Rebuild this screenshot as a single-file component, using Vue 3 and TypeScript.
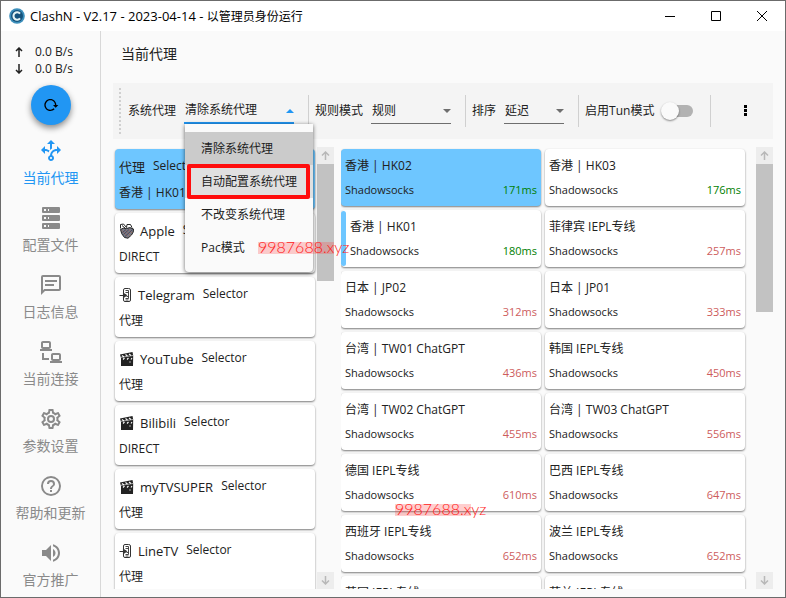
<script setup lang="ts">
import { ref } from 'vue'

interface NavItem { label: string; icon: string }
interface Group { name: string; now: string; icon?: 'apple' | 'phone' | 'clapper' }
interface Proxy { name: string; delay?: string; fast?: boolean; state?: 'selected' | 'active' }

const navItems: NavItem[] = [
  { label: '当前代理', icon: 'M9.64 13.4C8.63 12.5 7.34 12.03 6 12V15L2 11L6 7V10C7.67 10 9.3 10.57 10.63 11.59C10.22 12.15 9.89 12.76 9.64 13.4M18 15V12C17.5 12 13.5 12.16 13.05 16.2C14.61 16.75 15.43 18.47 14.88 20.03C14.33 21.59 12.61 22.41 11.05 21.86C9.5 21.3 8.67 19.59 9.22 18.03C9.5 17.17 10.2 16.5 11.05 16.2C11.34 12.61 14.4 9.88 18 10V7L22 11L18 15M13 19C13 18.45 12.55 18 12 18C11.45 18 11 18.45 11 19C11 19.55 11.45 20 12 20C12.55 20 13 19.55 13 19M11 11.12C11.58 10.46 12.25 9.89 13 9.43V5H16L12 1L8 5H11V11.12Z' },
  { label: '配置文件', icon: 'M4,1H20A1,1 0 0,1 21,2V6A1,1 0 0,1 20,7H4A1,1 0 0,1 3,6V2A1,1 0 0,1 4,1M4,9H20A1,1 0 0,1 21,10V14A1,1 0 0,1 20,15H4A1,1 0 0,1 3,14V10A1,1 0 0,1 4,9M4,17H20A1,1 0 0,1 21,18V22A1,1 0 0,1 20,23H4A1,1 0 0,1 3,22V18A1,1 0 0,1 4,17M9,5H10V3H9V5M9,13H10V11H9V13M9,21H10V19H9V21M5,3V5H7V3H5M5,11V13H7V11H5M5,19V21H7V19H5Z' },
  { label: '日志信息', icon: 'M20 2H4A2 2 0 0 0 2 4V22L6 18H20A2 2 0 0 0 22 16V4A2 2 0 0 0 20 2M20 16H5.17L4 17.17V4H20V16M6 7H18V9H6V7M6 11H15V13H6V11Z' },
  { label: '当前连接', icon: 'M4,1C2.89,1 2,1.89 2,3V7C2,8.11 2.89,9 4,9H1V11H13V9H10C11.11,9 12,8.11 12,7V3C12,1.89 11.11,1 10,1H4M4,3H10V7H4V3M14,13C12.89,13 12,13.89 12,15V19C12,20.11 12.89,21 14,21H11V23H23V21H20C21.11,21 22,20.11 22,19V15C22,13.89 21.11,13 20,13H14M3,13V18L3,20H10V18H5V13H3M14,15H20V19H14V15Z' },
  { label: '参数设置', icon: 'M12,8A4,4 0 0,1 16,12A4,4 0 0,1 12,16A4,4 0 0,1 8,12A4,4 0 0,1 12,8M12,10A2,2 0 0,0 10,12A2,2 0 0,0 12,14A2,2 0 0,0 14,12A2,2 0 0,0 12,10M10,22C9.75,22 9.54,21.82 9.5,21.58L9.13,18.93C8.5,18.68 7.96,18.34 7.44,17.94L4.95,18.95C4.73,19.03 4.46,18.95 4.34,18.73L2.34,15.27C2.21,15.05 2.27,14.78 2.46,14.63L4.57,12.97L4.5,12L4.57,11L2.46,9.37C2.27,9.22 2.21,8.95 2.34,8.73L4.34,5.27C4.46,5.05 4.73,4.96 4.95,5.05L7.44,6.05C7.96,5.66 8.5,5.32 9.13,5.07L9.5,2.42C9.54,2.18 9.75,2 10,2H14C14.25,2 14.46,2.18 14.5,2.42L14.87,5.07C15.5,5.32 16.04,5.66 16.56,6.05L19.05,5.05C19.27,4.96 19.54,5.05 19.66,5.27L21.66,8.73C21.79,8.95 21.73,9.22 21.54,9.37L19.43,11L19.5,12L19.43,13L21.54,14.63C21.73,14.78 21.79,15.05 21.66,15.27L19.66,18.73C19.54,18.95 19.27,19.04 19.05,18.95L16.56,17.95C16.04,18.34 15.5,18.68 14.87,18.93L14.5,21.58C14.46,21.82 14.25,22 14,22H10M11.25,4L10.88,6.61C9.68,6.86 8.62,7.5 7.85,8.39L5.44,7.35L4.69,8.65L6.8,10.2C6.4,11.37 6.4,12.64 6.8,13.8L4.68,15.36L5.43,16.66L7.86,15.62C8.63,16.5 9.68,17.14 10.87,17.38L11.24,20H12.76L13.13,17.39C14.32,17.14 15.37,16.5 16.14,15.62L18.57,16.66L19.32,15.36L17.2,13.81C17.6,12.64 17.6,11.37 17.2,10.2L19.31,8.65L18.56,7.35L16.15,8.39C15.38,7.5 14.32,6.86 13.12,6.62L12.75,4H11.25Z' },
  { label: '帮助和更新', icon: 'M11,18H13V16H11V18M12,2A10,10 0 0,0 2,12A10,10 0 0,0 12,22A10,10 0 0,0 22,12A10,10 0 0,0 12,2M12,20C7.59,20 4,16.41 4,12C4,7.59 7.59,4 12,4C16.41,4 20,7.59 20,12C20,16.41 16.41,20 12,20M12,6A4,4 0 0,0 8,10H10A2,2 0 0,1 12,8A2,2 0 0,1 14,10C14,12 11,11.75 11,15H13C13,12.75 16,12.5 16,10A4,4 0 0,0 12,6Z' },
  { label: '官方推广', icon: 'M14,3.23V5.29C16.89,6.15 19,8.83 19,12C19,15.17 16.89,17.84 14,18.7V20.77C18,19.86 21,16.28 21,12C21,7.72 18,4.14 14,3.23M16.5,12C16.5,10.23 15.5,8.71 14,7.97V16C15.5,15.29 16.5,13.76 16.5,12M3,9V15H7L12,20V4L7,9H3Z' },
]

const groups: Group[] = [
  { name: '代理', now: '香港 | HK01' },
  { name: 'Apple', now: 'DIRECT', icon: 'apple' },
  { name: 'Telegram', now: '代理', icon: 'phone' },
  { name: 'YouTube', now: '代理', icon: 'clapper' },
  { name: 'Bilibili', now: 'DIRECT', icon: 'clapper' },
  { name: 'myTVSUPER', now: '代理', icon: 'clapper' },
  { name: 'LineTV', now: '代理', icon: 'phone' },
]

const proxies: Proxy[] = [
  { name: '香港 | HK02', delay: '171ms', fast: true, state: 'selected' },
  { name: '香港 | HK03', delay: '176ms', fast: true },
  { name: '香港 | HK01', delay: '180ms', fast: true, state: 'active' },
  { name: '菲律宾 IEPL专线', delay: '257ms' },
  { name: '日本 | JP02', delay: '312ms' },
  { name: '日本 | JP01', delay: '333ms' },
  { name: '台湾 | TW01 ChatGPT', delay: '436ms' },
  { name: '韩国 IEPL专线', delay: '450ms' },
  { name: '台湾 | TW02 ChatGPT', delay: '455ms' },
  { name: '台湾 | TW03 ChatGPT', delay: '556ms' },
  { name: '德国 IEPL专线', delay: '610ms' },
  { name: '巴西 IEPL专线', delay: '647ms' },
  { name: '西班牙 IEPL专线', delay: '652ms' },
  { name: '波兰 IEPL专线', delay: '652ms' },
  { name: '英国 IEPL专线' },
  { name: '荷兰 IEPL专线' },
]

const proxyModes = ['清除系统代理', '自动配置系统代理', '不改变系统代理', 'Pac模式']
const proxyMode = ref(proxyModes[0])
const ruleMode = ref('规则')
const sorting = ref('延迟')
const tun = ref(false)
const activeNav = ref(0)
const activeGroup = ref(0)
</script>

<template>
  <div class="window">
    <header class="titlebar">
      <svg class="logo" viewBox="0 0 16 16" aria-hidden="true">
        <circle cx="8" cy="8" r="7.8" fill="#3d8fbb" />
        <circle cx="8" cy="8" r="6" fill="#14527c" />
        <path d="M11 5.6A3.7 3.7 0 1 0 11 10.400" fill="none" stroke="#e4f3f3" stroke-width="2.1" />
      </svg>
      <span class="caption"><span class="version">ClashN - V2.17 - 2023-04-14 - </span>以管理员身份运行</span>
      <button class="win-btn" type="button" aria-label="最小化">
        <svg viewBox="0 0 10 10"><path d="M0 5.500H10" /></svg>
      </button>
      <button class="win-btn" type="button" aria-label="最大化">
        <svg viewBox="0 0 10 10"><path d="M.5 .5H9.500V9.500H.5Z" /></svg>
      </button>
      <button class="win-btn" type="button" aria-label="关闭">
        <svg viewBox="0 0 10 10"><path d="M0 0L10 10M10 0L0 10" /></svg>
      </button>
    </header>

    <div class="body">
      <aside class="sidebar">
        <div class="rates">
          <div class="rate">
            <svg viewBox="0 0 8 10"><path d="M4 10V1M1 4L4 1L7 4" /></svg><span>0.0 B/s</span>
          </div>
          <div class="rate">
            <svg viewBox="0 0 8 10"><path d="M4 0V9M1 6L4 9L7 6" /></svg><span>0.0 B/s</span>
          </div>
        </div>
        <button class="reload" type="button" aria-label="重新加载">
          <svg viewBox="0 0 24 24"><path d="M2 12C2 16.97 6.03 21 11 21C13.39 21 15.68 20.06 17.4 18.4L15.9 16.9C14.63 18.25 12.86 19 11 19C4.76 19 1.64 11.46 6.05 7.05C10.46 2.64 18 5.77 18 12H15L19 16H19.1L23 12H20C20 7.03 15.97 3 11 3C6.03 3 2 7.03 2 12Z" /></svg>
        </button>
        <nav class="nav">
          <button
            v-for="(item, i) in navItems"
            :key="item.label"
            type="button"
            :class="['nav-item', { current: i === activeNav }]"
            @click="activeNav = i"
          >
            <svg viewBox="0 0 24 24" aria-hidden="true"><path :d="item.icon" /></svg>
            <span>{{ item.label }}</span>
          </button>
        </nav>
      </aside>

      <main class="main">
        <h1 class="heading">当前代理</h1>

        <div class="toolbar">
          <span class="grip"></span>
          <div class="field">
            <label for="proxy-mode">系统代理</label>
            <div class="select open">
              <select id="proxy-mode" v-model="proxyMode">
                <option v-for="m in proxyModes" :key="m">{{ m }}</option>
              </select>
              <i class="caret"></i>
              <ul class="menu" role="listbox" aria-label="系统代理">
                <li
                  v-for="(m, i) in proxyModes"
                  :key="m"
                  role="option"
                  :aria-selected="m === proxyMode"
                  :class="{ chosen: m === proxyMode, marked: i === 1 }"
                  @click="proxyMode = m"
                >{{ m }}</li>
              </ul>
            </div>
          </div>
          <span class="sep"></span>
          <div class="field">
            <label for="rule-mode">规则模式</label>
            <div class="select rule">
              <select id="rule-mode" v-model="ruleMode">
                <option>规则</option>
                <option>全局</option>
                <option>直连</option>
              </select>
              <i class="caret"></i>
            </div>
          </div>
          <span class="sep"></span>
          <div class="field">
            <label for="sorting">排序</label>
            <div class="select sort">
              <select id="sorting" v-model="sorting">
                <option>延迟</option>
                <option>名称</option>
              </select>
              <i class="caret"></i>
            </div>
          </div>
          <span class="sep"></span>
          <div class="field tun">
            <label for="tun">启用Tun模式</label>
            <input id="tun" v-model="tun" class="switch" type="checkbox" role="switch" />
          </div>
          <span class="sep"></span>
          <button class="more" type="button" aria-label="更多">
            <svg viewBox="0 0 4 12"><path d="M1 0H4V3H1ZM1 4H4V7H1ZM1 8H4V11H1Z" /></svg>
          </button>
        </div>

        <div class="lists">
          <section class="pane groups-pane">
            <div class="groups">
              <button
                v-for="(g, i) in groups"
                :key="g.name"
                type="button"
                :class="['card', 'group', { selected: i === activeGroup }]"
                @click="activeGroup = i"
              >
                <span class="group-head">
                  <svg v-if="g.icon === 'apple'" class="emoji" viewBox="0 0 16 16" aria-hidden="true">
                    <path d="M1.500 6.500Q4 4.500 7.500 5.500Q11 3.500 14.500 6Q15 9 12.500 12L9 15.200L5.500 14.500Q2 11 1.500 6.500Z" fill="#777a86" stroke="#252525" />
                    <path d="M1.500 5.500V1.500L4.500 1L7.500 4.500M7.500 4.500L8 1.500H11.500L13 4.500M3 2.500L6 5" fill="none" stroke="#252525" />
                    <path d="M3 7.500L9 13.500M6 6.500L11.500 12.500M9.500 6L13 10" stroke="#a8664e" stroke-width=".7" />
                    <path d="M13.500 6.500L6 13.500M10 6.500L4.500 11.500M7 6.500L3.500 9.500" stroke="#2c3352" stroke-width=".7" />
                  </svg>
                  <svg v-else-if="g.icon === 'phone'" class="emoji narrow" viewBox="0 0 14 16" aria-hidden="true">
                    <path d="M4.500 6V3Q4.500 1.500 6 1.500H9.500Q11.500 1.500 11.500 3V13Q11.500 14.500 10 14.500H6Q4.500 14.500 4.500 13V10.500" fill="none" stroke="#333" />
                    <path d="M6.500 3.500H9.500V11.500H6.500M6.500 5.500H9.500M7.500 9.500H9.500M6.500 13H9.500" fill="none" stroke="#333" stroke-width=".9" />
                    <path d="M.5 8.500H5M4.500 6.500L7.500 8.200L4.500 10.500Z" fill="#333" stroke="#333" stroke-width="1.100" />
                  </svg>
                  <svg v-else-if="g.icon === 'clapper'" class="emoji" viewBox="0 0 16 16" aria-hidden="true">
                    <path d="M1 3.500L13.500 1L14.200 4.500L14 15H2V7Z" fill="#222" />
                    <path d="M3 4.500L5 6M6.500 3.500L8.500 5M10 3L12 4.500M4 8.500L5.500 7M8 8.500L9.500 7M12 8.500L13 7" stroke="#fff" stroke-width="1.100" />
                    <path d="M2 6.300L14 4.500M10 11H12" stroke="#fff" stroke-width=".6" />
                  </svg>
                  <span class="group-name">{{ g.name }}</span>
                  <span class="group-type">Selector</span>
                </span>
                <span class="group-now">{{ g.now }}</span>
              </button>
            </div>
            <div class="scroll" aria-hidden="true">
              <span class="arrow"><svg viewBox="0 0 9 9"><path d="M4.500 9V1M1 4.500L4.500 1L8 4.500" /></svg></span>
              <span class="track"><i class="thumb short"></i></span>
              <span class="arrow"><svg viewBox="0 0 9 9"><path d="M4.500 0V8M1 4.500L4.500 8L8 4.500" /></svg></span>
            </div>
          </section>

          <section class="pane proxies-pane">
            <div class="proxies">
              <button
                v-for="p in proxies"
                :key="p.name"
                type="button"
                :class="['card', 'proxy', p.state]"
              >
                <i v-if="p.state === 'active'" class="strip"></i>
                <span class="proxy-text">
                  <span>{{ p.name }}</span>
                  <span v-if="p.delay" class="proxy-foot">
                    <span>Shadowsocks</span>
                    <span :class="['delay', { fast: p.fast }]">{{ p.delay }}</span>
                  </span>
                </span>
              </button>
            </div>
            <div class="scroll" aria-hidden="true">
              <span class="arrow"><svg viewBox="0 0 9 9"><path d="M4.500 9V1M1 4.500L4.500 1L8 4.500" /></svg></span>
              <span class="track"><i class="thumb"></i></span>
              <span class="arrow"><svg viewBox="0 0 9 9"><path d="M4.500 0V8M1 4.500L4.500 8L8 4.500" /></svg></span>
            </div>
          </section>
        </div>
      </main>
    </div>

    <span class="watermark first">9987688.xyz</span>
    <span class="watermark second">9987688.xyz</span>
  </div>
</template>

<style>
body {
  margin: 0;
  background: #fafafa;
}
</style>

<style scoped>
* {
  box-sizing: border-box;
}

.window {
  position: relative;
  display: flex;
  flex-direction: column;
  height: 100vh;
  overflow: hidden;
  border: 1px solid #6b6b6b;
  background: #fafafa;
  color: #212121;
  font-family: "Open Sans", "Noto Sans CJK SC", sans-serif;
  font-size: 12px;
  line-height: 16px;
}

button,
select {
  padding: 0;
  border: 0;
  background: none;
  color: inherit;
  font: inherit;
}

svg {
  display: block;
}

.titlebar {
  display: flex;
  flex: none;
  align-items: center;
  height: 30px;
  padding-left: 8px;
  background: #fff;
  color: #000;
}

.logo {
  width: 16px;
  height: 16px;
}

.caption {
  flex: 1;
  padding-left: 5px;
}

.version {
  font-size: 13px;
}

.win-btn {
  display: grid;
  place-items: center;
  width: 46px;
  height: 30px;
}

.win-btn svg {
  width: 10px;
  height: 10px;
  overflow: visible;
  fill: none;
  stroke: #000;
}

.body {
  display: flex;
  flex: 1;
  min-height: 0;
}

.sidebar {
  display: flex;
  flex: none;
  flex-direction: column;
  align-items: center;
  width: 100px;
  padding-top: 12px;
  border-right: 1px solid #d8d8d8;
}

.rates {
  align-self: stretch;
  padding-left: 14px;
}

.rate {
  display: flex;
  align-items: center;
  gap: 12px;
  line-height: 17px;
}

.rate svg {
  width: 8px;
  height: 10px;
  fill: none;
  stroke: #212121;
  stroke-width: 1.500;
}

.reload {
  display: grid;
  flex: none;
  place-items: center;
  width: 40px;
  height: 40px;
  margin-top: 8px;
  border-radius: 50%;
  background: #2196f3;
  box-shadow: 0 3px 6px rgba(0, 0, 0, .45);
}

.reload svg {
  width: 16px;
  height: 16px;
}

.nav {
  display: flex;
  flex-direction: column;
  align-self: stretch;
  padding-top: 14px;
}

.nav-item {
  display: flex;
  flex: none;
  flex-direction: column;
  align-items: center;
  gap: 6px;
  height: 67px;
  color: #8a8a8a;
  font-size: 14px;
  line-height: 18px;
}

.nav-item svg {
  width: 24px;
  height: 24px;
  fill: currentColor;
}

.nav-item.current {
  color: #2196f3;
}

.main {
  display: flex;
  flex: 1;
  flex-direction: column;
  min-width: 0;
  padding: 0 12px 8px;
}

.heading {
  flex: none;
  margin: 0;
  padding: 13px 8px 19px;
  font-size: 14px;
  font-weight: 400;
  line-height: 20px;
}

.toolbar {
  display: flex;
  flex: none;
  align-items: center;
  height: 56px;
  padding-left: 6px;
  background: #f4f4f4;
}

.grip {
  width: 2px;
  height: 46px;
  margin-right: 7px;
  background: repeating-linear-gradient(#d0d0d0 0 2px, transparent 2px 4px);
}

.field {
  display: flex;
  align-items: center;
  gap: 8px;
}

.sep {
  width: 1px;
  height: 32px;
  margin: 0 6px 0 14px;
  background: #d0d0d0;
}

.select {
  position: relative;
  width: 110px;
}

.select.rule {
  width: 80px;
}

.select.sort {
  width: 60px;
}

.select select {
  display: block;
  width: 100%;
  height: 26px;
  padding-left: 1px;
  border-bottom: 1px solid #6e6e6e;
  border-radius: 0;
  outline: 0;
  appearance: none;
}

.select.open select {
  border-bottom: 2px solid #2196f3;
}

.caret {
  position: absolute;
  top: 11px;
  right: 0;
  border: 4px solid transparent;
  border-top-color: #6e6e6e;
  border-bottom-width: 0;
}

.open .caret {
  border-width: 0 4px 4px;
  border-bottom-color: #2196f3;
}

.menu {
  position: absolute;
  z-index: 2;
  top: 26px;
  left: 1px;
  width: 128px;
  margin: 0;
  padding: 8px 0;
  border-radius: 0 0 4px 4px;
  background: #fafafa;
  box-shadow: 0 1px 4px rgba(0, 0, 0, .6);
  list-style: none;
  white-space: nowrap;
}

.menu li {
  padding: 0 16px;
  line-height: 33px;
}

.menu .chosen {
  background: #cbcbcb;
}

.menu .marked {
  position: relative;
  background: #e0e0e0;
}

.menu .marked::after {
  position: absolute;
  inset: -1px 3px -1px 2px;
  border: 4px solid #ff0d0d;
  border-radius: 2px;
  content: "";
}

.switch {
  position: relative;
  width: 32px;
  height: 18px;
  margin: 0;
  appearance: none;
}

.switch::before {
  position: absolute;
  inset: 3px 0 3px 4px;
  border-radius: 6px;
  background: #b2b2b2;
  content: "";
}

.switch::after {
  position: absolute;
  top: 0;
  left: 0;
  width: 18px;
  height: 18px;
  border-radius: 50%;
  background: #fafafa;
  box-shadow: 0 1px 2px rgba(0, 0, 0, .45);
  content: "";
}

.switch:checked::after {
  left: 14px;
  background: #2196f3;
}

.tun {
  gap: 7px;
}

.tun + .sep {
  margin: 0 18px 0 17px;
}

.more {
  display: grid;
  place-items: center;
  width: 32px;
  height: 32px;
}

.more svg {
  width: 4px;
  height: 12px;
}

.lists {
  display: flex;
  flex: 1;
  gap: 7px;
  min-height: 0;
  padding-top: 8px;
}

.pane {
  display: flex;
  min-width: 0;
  overflow: hidden;
}

.groups-pane {
  flex: none;
  width: 221px;
}

.proxies-pane {
  flex: 1;
}

.groups {
  display: flex;
  flex: 1;
  flex-direction: column;
  gap: 4px;
  padding: 2px;
}

.proxies {
  display: grid;
  flex: 1;
  grid-template-columns: 1fr 1fr;
  grid-auto-rows: 57px;
  gap: 4px;
  padding-top: 2px;
  margin-right: 11px;
}

.card {
  flex: none;
  border-radius: 4px;
  background: #fff;
  box-shadow: 0 1px 2px rgba(0, 0, 0, .5);
  text-align: left;
  white-space: nowrap;
}

.card.selected {
  background: #6ec6ff;
}

.group {
  display: flex;
  flex-direction: column;
  gap: 8px;
  height: 60px;
  padding: 8px 4px;
}

.group-head {
  display: flex;
  height: 20px;
  line-height: 18px;
}

.group-name {
  padding-right: 8px;
  font-size: 13px;
  line-height: 20px;
}

.emoji {
  width: 16px;
  height: 16px;
  margin: 2px 5px 0 0;
}

.emoji.narrow {
  width: 14px;
}

.proxy {
  display: flex;
}

.strip {
  flex: none;
  width: 5px;
  height: 55px;
  margin-top: 1px;
  border-radius: 3px;
  background: #6ec6ff;
}

.proxy-text {
  display: flex;
  flex: 1;
  flex-direction: column;
  gap: 8px;
  padding: 9px 4px;
}

.proxy-foot {
  display: flex;
  justify-content: space-between;
  font-size: 11px;
}

.delay {
  color: #cd5c5c;
}

.delay.fast {
  color: #008000;
}

.scroll {
  display: flex;
  flex: none;
  flex-direction: column;
  width: 17px;
}

.arrow {
  display: grid;
  flex: none;
  place-items: center;
  height: 17px;
  background: #ededed;
}

.arrow svg {
  width: 9px;
  height: 9px;
  fill: none;
  stroke: #b8b8b8;
  stroke-width: 1.500;
}

.track {
  flex: 1;
}

.thumb {
  display: block;
  height: 148px;
  background: #c2c2c2;
}

.thumb.short {
  height: 117px;
}

.watermark {
  position: absolute;
  z-index: 3;
  background: linear-gradient(rgba(255, 60, 60, .25), rgba(255, 60, 60, .25)) 0 5px / 76px 12px no-repeat;
  color: #ff1a1a;
  font-family: Lato, sans-serif;
  font-size: 16px;
  font-weight: 300;
  line-height: 20px;
  pointer-events: none;
}

.watermark.first {
  top: 236px;
  left: 257px;
}

.watermark.second {
  top: 498px;
  left: 394px;
}
</style>
